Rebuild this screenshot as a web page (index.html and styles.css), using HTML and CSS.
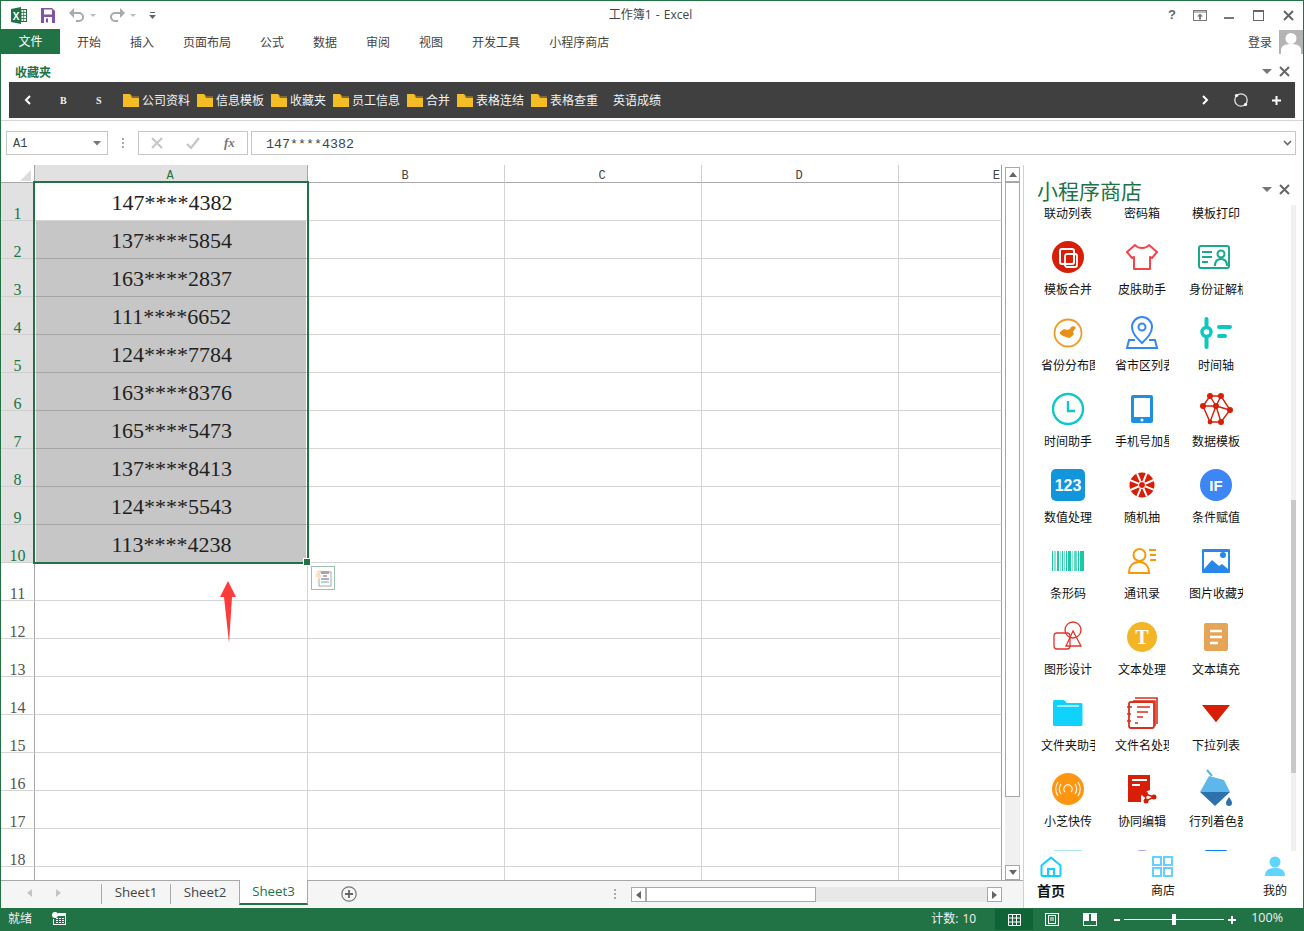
FILE: index.html
```html
<!DOCTYPE html>
<html lang="zh-CN">
<head>
<meta charset="utf-8">
<title>工作簿1 - Excel</title>
<link rel="stylesheet" href="styles.css">
</head>
<body>
<div class="window">
  <header class="titlebar">
    <div class="quick">
      <svg class="qa-excel" width="16" height="17" viewBox="0 0 16 17"><path d="M0 2l10-2v17L0 15z" fill="#217346"/><rect x="10" y="2.500" width="5.500" height="12" fill="#fff" stroke="#217346"/><path d="M10 5.500h5M10 8.500h5M10 11.500h5M12.700 3v11" stroke="#217346" stroke-width=".8"/><text x="5" y="12.500" font-family="Liberation Sans" font-weight="700" font-size="10" fill="#fff" text-anchor="middle">X</text></svg>
      <svg class="qa-save" width="14" height="15" viewBox="0 0 14 15"><path d="M0 0h11l3 3v12H0z" fill="#8053a8"/><rect x="3" y="1.500" width="8" height="5" fill="#fff"/><rect x="3" y="9" width="8" height="6" fill="#fff"/><rect x="5" y="10.500" width="2" height="4" fill="#8053a8"/></svg>
      <svg class="qa-undo" width="27" height="14" viewBox="0 0 27 14"><path d="M4 5h6a4 4 0 0 1 0 8H7" fill="none" stroke="#aaa" stroke-width="2"/><path d="M0 5l5-5v10z" fill="#aaa"/><path d="M21 6h6l-3 3z" fill="#bbb"/></svg>
      <svg class="qa-redo" width="27" height="14" viewBox="0 0 27 14"><path d="M12 5H6a4 4 0 0 0 0 8h3" fill="none" stroke="#aaa" stroke-width="2"/><path d="M16 5l-5-5v10z" fill="#aaa"/><path d="M21 6h6l-3 3z" fill="#bbb"/></svg>
      <svg class="qa-more" width="7" height="8" viewBox="0 0 7 8"><path d="M1 0h5v1H1zM0 3h7L3.500 7z" fill="#666"/></svg>
    </div>
    <div class="doc-title">工作簿1 - Excel</div>
    <div class="win-btns">
      <span class="help">?</span>
      <svg class="btn-display" width="14" height="11" viewBox="0 0 14 11"><rect x=".5" y=".5" width="13" height="10" fill="none" stroke="#777"/><path d="M1 2h12" stroke="#777"/><path d="M7 3.500l3 3H8v3H6v-3H4z" fill="#777"/></svg>
      <svg width="10" height="10" viewBox="0 0 10 10"><rect y="7" width="10" height="2" fill="#777"/></svg>
      <svg width="11" height="11" viewBox="0 0 11 11"><rect x=".5" y=".5" width="10" height="10" fill="none" stroke="#666"/><rect width="11" height="2" fill="#666"/></svg>
      <svg width="11" height="11" viewBox="0 0 11 11"><path d="M1 1l9 9M10 1l-9 9" stroke="#666" stroke-width="2"/></svg>
    </div>
  </header>

  <nav class="tabs">
    <div class="tab-file">文件</div>
    <div class="tab-list">
      <span>开始</span><span>插入</span><span>页面布局</span><span>公式</span><span>数据</span><span>审阅</span><span>视图</span><span>开发工具</span><span>小程序商店</span>
    </div>
    <div class="account">
      <span>登录</span>
      <svg width="24" height="24" viewBox="0 0 24 24"><rect width="24" height="24" fill="#b4b4b4"/><circle cx="12" cy="8.500" r="5.500" fill="#fff"/><path d="M2 24v-4c0-4 4-6 10-6s10 2 10 6v4z" fill="#fff"/></svg>
    </div>
  </nav>

  <section class="ribbon">
    <div class="fav-head">
      <span class="fav-title">收藏夹</span>
      <svg class="pane-drop" width="10" height="6" viewBox="0 0 10 6"><path d="M0 0h10L5 5z" fill="#777"/></svg>
      <svg class="pane-close" width="11" height="11" viewBox="0 0 11 11"><path d="M1 1l9 9M10 1l-9 9" stroke="#666" stroke-width="2"/></svg>
    </div>
    <div class="fav-bar">
      <svg class="nav-back" width="8" height="10" viewBox="0 0 8 10"><path d="M6 1L2 5l4 4" fill="none" stroke="#fff" stroke-width="2"/></svg>
      <span class="fav-b">B</span>
      <span class="fav-s">S</span>
      <span class="fav-item"><svg width="16" height="13" viewBox="0 0 16 13"><path d="M0 0h7l2 2h7v11H0z" fill="#f4bd26"/><path d="M7 0l2 2h7v2H9z" fill="#7d6a3a"/></svg>公司资料</span>
      <span class="fav-item"><svg width="16" height="13" viewBox="0 0 16 13"><path d="M0 0h7l2 2h7v11H0z" fill="#f4bd26"/><path d="M7 0l2 2h7v2H9z" fill="#7d6a3a"/></svg>信息模板</span>
      <span class="fav-item"><svg width="16" height="13" viewBox="0 0 16 13"><path d="M0 0h7l2 2h7v11H0z" fill="#f4bd26"/><path d="M7 0l2 2h7v2H9z" fill="#7d6a3a"/></svg>收藏夹</span>
      <span class="fav-item"><svg width="16" height="13" viewBox="0 0 16 13"><path d="M0 0h7l2 2h7v11H0z" fill="#f4bd26"/><path d="M7 0l2 2h7v2H9z" fill="#7d6a3a"/></svg>员工信息</span>
      <span class="fav-item"><svg width="16" height="13" viewBox="0 0 16 13"><path d="M0 0h7l2 2h7v11H0z" fill="#f4bd26"/><path d="M7 0l2 2h7v2H9z" fill="#7d6a3a"/></svg>合并</span>
      <span class="fav-item"><svg width="16" height="13" viewBox="0 0 16 13"><path d="M0 0h7l2 2h7v11H0z" fill="#f4bd26"/><path d="M7 0l2 2h7v2H9z" fill="#7d6a3a"/></svg>表格连结</span>
      <span class="fav-item"><svg width="16" height="13" viewBox="0 0 16 13"><path d="M0 0h7l2 2h7v11H0z" fill="#f4bd26"/><path d="M7 0l2 2h7v2H9z" fill="#7d6a3a"/></svg>表格查重</span>
      <span class="fav-plain">英语成绩</span>
      <svg class="nav-next" width="8" height="10" viewBox="0 0 8 10"><path d="M2 1l4 4-4 4" fill="none" stroke="#fff" stroke-width="2"/></svg>
      <svg class="nav-sync" width="16" height="16" viewBox="0 0 16 16"><circle cx="8" cy="8" r="6.200" fill="none" stroke="#e4e4e4" stroke-width="1.300"/><circle cx="3.500" cy="3.500" r="1.600" fill="#fff"/><circle cx="12.500" cy="12.500" r="1.600" fill="#fff"/></svg>
      <svg class="nav-plus" width="9" height="9" viewBox="0 0 9 9"><path d="M4.500 0v9M0 4.500h9" stroke="#fff" stroke-width="2"/></svg>
    </div>
  </section>

  <div class="formula-row">
    <div class="name-box"><span class="mono-shift">A1</span><svg width="8" height="5" viewBox="0 0 8 5"><path d="M0 0h8L4 4.500z" fill="#777"/></svg></div>
    <div class="dots"><i></i><i></i><i></i></div>
    <div class="fx-box">
      <svg width="12" height="12" viewBox="0 0 12 12"><path d="M1 1l10 10M11 1L1 11" stroke="#c6c6c6" stroke-width="2"/></svg>
      <svg width="14" height="12" viewBox="0 0 14 12"><path d="M1 7l4 4 8-10" fill="none" stroke="#c6c6c6" stroke-width="2.200"/></svg>
      <span class="fx">fx</span>
    </div>
    <div class="formula-input"><span class="mono-shift">147****4382</span><svg width="9" height="6" viewBox="0 0 9 6"><path d="M1 1l3.500 3.500L8 1" fill="none" stroke="#666" stroke-width="1.600"/></svg></div>
  </div>

  <div class="work">
    <div class="book">
      <div class="sheet-area">
        <div class="grid">
          <div class="corner"><svg width="11" height="11" viewBox="0 0 11 11"><path d="M11 0v11H0z" fill="#dcdcdc"/></svg></div>
          <div class="col sel-col">A</div><div class="col">B</div><div class="col">C</div><div class="col">D</div><div class="col col-last">E</div>

          <div class="rh on">1</div><div class="c a c-first">147****4382</div><div class="c"></div><div class="c"></div><div class="c"></div><div class="c end"></div>
          <div class="rh on">2</div><div class="c a sel">137****5854</div><div class="c"></div><div class="c"></div><div class="c"></div><div class="c end"></div>
          <div class="rh on">3</div><div class="c a sel">163****2837</div><div class="c"></div><div class="c"></div><div class="c"></div><div class="c end"></div>
          <div class="rh on">4</div><div class="c a sel">111****6652</div><div class="c"></div><div class="c"></div><div class="c"></div><div class="c end"></div>
          <div class="rh on">5</div><div class="c a sel">124****7784</div><div class="c"></div><div class="c"></div><div class="c"></div><div class="c end"></div>
          <div class="rh on">6</div><div class="c a sel">163****8376</div><div class="c"></div><div class="c"></div><div class="c"></div><div class="c end"></div>
          <div class="rh on">7</div><div class="c a sel">165****5473</div><div class="c"></div><div class="c"></div><div class="c"></div><div class="c end"></div>
          <div class="rh on">8</div><div class="c a sel">137****8413</div><div class="c"></div><div class="c"></div><div class="c"></div><div class="c end"></div>
          <div class="rh on">9</div><div class="c a sel">124****5543</div><div class="c"></div><div class="c"></div><div class="c"></div><div class="c end"></div>
          <div class="rh on">10</div><div class="c a sel">113****4238</div><div class="c"></div><div class="c"></div><div class="c"></div><div class="c end"></div>
          <div class="rh">11</div><div class="c"></div><div class="c"></div><div class="c"></div><div class="c"></div><div class="c end"></div>
          <div class="rh">12</div><div class="c"></div><div class="c"></div><div class="c"></div><div class="c"></div><div class="c end"></div>
          <div class="rh">13</div><div class="c"></div><div class="c"></div><div class="c"></div><div class="c"></div><div class="c end"></div>
          <div class="rh">14</div><div class="c"></div><div class="c"></div><div class="c"></div><div class="c"></div><div class="c end"></div>
          <div class="rh">15</div><div class="c"></div><div class="c"></div><div class="c"></div><div class="c"></div><div class="c end"></div>
          <div class="rh">16</div><div class="c"></div><div class="c"></div><div class="c"></div><div class="c"></div><div class="c end"></div>
          <div class="rh">17</div><div class="c"></div><div class="c"></div><div class="c"></div><div class="c"></div><div class="c end"></div>
          <div class="rh">18</div><div class="c"></div><div class="c"></div><div class="c"></div><div class="c"></div><div class="c end"></div>
          <div class="rh"></div><div class="c"></div><div class="c"></div><div class="c"></div><div class="c"></div><div class="c end"></div>

          <div class="selection"><span class="handle"></span></div>
          <div class="paste-opt"><svg width="18" height="18" viewBox="0 0 18 18"><rect x="5" y="3" width="12" height="14" fill="#fff" stroke="#a8a8a8"/><rect x="7" y="2" width="8" height="3" fill="#a8a8a8"/><path d="M4 1L1 8h3L3 13l5-7H5l2-5z" fill="#fbe3c4"/><rect x="9" y="6" width="4" height="2" fill="#eb9b8f"/><rect x="7" y="9" width="8" height="2" fill="#98b9d6"/><rect x="7" y="12" width="8" height="2" fill="#b9d8c9"/></svg></div>
          <svg class="red-arrow" width="16" height="62" viewBox="0 0 16 62"><path d="M8 0l8 16h-4L9 62 4 16H0z" fill="#ff3b3b"/></svg>
        </div>
        <div class="vscroll">
          <div class="sb-btn"><svg width="8" height="5" viewBox="0 0 8 5"><path d="M0 5h8L4 0z" fill="#666"/></svg></div>
          <div class="v-track"><div class="v-thumb"></div></div>
          <div class="sb-btn"><svg width="8" height="5" viewBox="0 0 8 5"><path d="M0 0h8L4 5z" fill="#666"/></svg></div>
        </div>
      </div>
      <div class="sheet-bar">
        <svg class="sn-l" width="5" height="8" viewBox="0 0 5 8"><path d="M5 0v8L0 4z" fill="#c4c4c4"/></svg>
        <svg class="sn-r" width="5" height="8" viewBox="0 0 5 8"><path d="M0 0v8l5-4z" fill="#c4c4c4"/></svg>
        <div class="stab first">Sheet1</div>
        <div class="stab">Sheet2</div>
        <div class="stab active">Sheet3</div>
        <svg class="add-sheet" width="16" height="16" viewBox="0 0 16 16"><circle cx="8" cy="8" r="7.200" fill="none" stroke="#777" stroke-width="1.200"/><path d="M8 4v8M4 8h8" stroke="#666" stroke-width="1.800"/></svg>
        <div class="dots sheet-dots"><i></i><i></i><i></i></div>
        <div class="hscroll">
          <div class="sb-btn h"><svg width="5" height="8" viewBox="0 0 5 8"><path d="M5 0v8L0 4z" fill="#666"/></svg></div>
          <div class="h-thumb"></div>
          <div class="h-track"></div>
          <div class="sb-btn h"><svg width="5" height="8" viewBox="0 0 5 8"><path d="M0 0v8l5-4z" fill="#666"/></svg></div>
        </div>
      </div>
    </div>

    <aside class="store">
      <div class="store-head">
        <span class="store-title">小程序商店</span>
        <svg class="pane-drop" width="10" height="6" viewBox="0 0 10 6"><path d="M0 0h10L5 5z" fill="#777"/></svg>
        <svg class="pane-close" width="11" height="11" viewBox="0 0 11 11"><path d="M1 1l9 9M10 1l-9 9" stroke="#666" stroke-width="2"/></svg>
      </div>
      <div class="store-body">
        <div class="app-grid">
          <div class="app cut"><span>联动列表</span></div>
          <div class="app cut"><span>密码箱</span></div>
          <div class="app cut"><span>模板打印</span></div>

          <div class="app"><svg viewBox="-20 -20 40 40"><circle r="16" fill="#d81e06"/><rect x="-8" y="-8" width="14" height="15" rx="2" fill="none" stroke="#fff" stroke-width="2"/><rect x="-3" y="-3" width="12" height="13" rx="2" fill="none" stroke="#fff" stroke-width="1.800"/></svg><span>模板合并</span></div>
          <div class="app"><svg viewBox="-20 -20 40 40"><path d="M-7-12C-4-8 4-8 7-12l8 7-5 6-2-1v12H-8V0l-2 1-5-6z" fill="none" stroke="#f4454a" stroke-width="2" stroke-linejoin="round"/></svg><span>皮肤助手</span></div>
          <div class="app"><svg viewBox="-20 -20 40 40"><rect x="-17" y="-11" width="30" height="22" rx="2" fill="none" stroke="#1aa98d" stroke-width="2"/><path d="M-14-5h10M-14 0h10M-14 5h6" stroke="#1aa98d" stroke-width="2"/><circle cx="5" cy="-3" r="3.500" fill="none" stroke="#1aa98d" stroke-width="2"/><path d="M-1 9c0-5 2-7 6-7s6 2 6 7" fill="none" stroke="#1aa98d" stroke-width="2"/></svg><span>身份证解析</span></div>

          <div class="app"><svg viewBox="-20 -20 40 40"><circle r="13.500" fill="none" stroke="#ec9b2a" stroke-width="1.800"/><path d="M-8-1l4-3 3 1 3-1 1-2 3-1 2 2-2 2-1 2 1 2-3 3-2 1-3-1-3-1-3-2z" fill="#e88f17"/></svg><span>省份分布图</span></div>
          <div class="app"><svg viewBox="-20 -20 40 40"><path d="M0 10C-6 4-10 0-10-6a10 10 0 0 1 20 0C10 0 6 4 0 10z" fill="none" stroke="#3587f5" stroke-width="2"/><circle cy="-6" r="3.500" fill="none" stroke="#3587f5" stroke-width="2"/><path d="M-7 7h-6l-2 8h30l-2-8H7" fill="none" stroke="#3587f5" stroke-width="2"/></svg><span>省市区列表</span></div>
          <div class="app"><svg viewBox="-20 -20 40 40"><path d="M-9.500-14v28" stroke="#0dc8c0" stroke-width="4" stroke-linecap="round"/><circle cx="-9.500" cy="-1" r="4.500" fill="#fff" stroke="#0dc8c0" stroke-width="3.500"/><path d="M3-6H14M3 3H9" stroke="#0dc8c0" stroke-width="4" stroke-linecap="round"/></svg><span>时间轴</span></div>

          <div class="app"><svg viewBox="-20 -20 40 40"><circle r="15" fill="none" stroke="#12c6cc" stroke-width="2.400"/><path d="M0-8V2h7" fill="none" stroke="#12c6cc" stroke-width="2.400"/></svg><span>时间助手</span></div>
          <div class="app"><svg viewBox="-20 -20 40 40"><rect x="-11" y="-14" width="22" height="28" rx="2" fill="#1d8fe4"/><rect x="-8" y="-11" width="16" height="19" fill="#fff"/><circle cy="11" r="1.500" fill="#fff"/></svg><span>手机号加星</span></div>
          <div class="app"><svg viewBox="-20 -20 40 40"><g fill="none" stroke="#d81e06" stroke-width="1.400"><path d="M-6-13H5L14 1 5 13H-6L-13-3z"/><path d="M-13-3H0L14 1M0-3L-6 13M0-3L5 13M-6-13L0-3M5-13L0-3"/></g><g fill="#d81e06"><circle cx="-6" cy="-13" r="3"/><circle cx="5" cy="-13" r="3"/><circle cx="14" cy="1" r="3"/><circle cx="-13" cy="-3" r="3"/><circle cy="-3" r="3"/><circle cx="5" cy="13" r="3"/><circle cx="-6" cy="13" r="2.400"/></g></svg><span>数据模板</span></div>

          <div class="app"><svg viewBox="-20 -20 40 40"><rect x="-17" y="-16" width="34" height="32" rx="5" fill="#1296db"/><text y="6" text-anchor="middle" class="ic-text ic-123">123</text></svg><span>数值处理</span></div>
          <div class="app"><svg viewBox="-20 -20 40 40"><circle r="12.500" fill="#d81e06"/><path d="M0-13V13M-13 0H13M-9-9L9 9M9-9L-9 9" stroke="#fff" stroke-width="2" transform="rotate(22)"/><circle r="3.500" fill="#d81e06" stroke="#fff" stroke-width="1"/></svg><span>随机抽</span></div>
          <div class="app"><svg viewBox="-20 -20 40 40"><circle r="16" fill="#3d86f6"/><text y="5.500" text-anchor="middle" class="ic-text ic-if">IF</text></svg><span>条件赋值</span></div>

          <div class="app"><svg viewBox="-20 -20 40 40"><g fill="#1cc9a4"><rect x="-16" y="-10" width="1" height="20"/><rect x="-14" y="-10" width="2" height="20" opacity=".5"/><rect x="-11" y="-10" width="2" height="20"/><rect x="-8" y="-10" width="1" height="20" opacity=".5"/><rect x="-6" y="-10" width="1" height="20"/><rect x="-4" y="-10" width="1" height="20" opacity=".6"/><rect x="-2" y="-10" width="1" height="20"/><rect x="0" y="-10" width="3" height="20"/><rect x="4" y="-10" width="1" height="20" opacity=".5"/><rect x="6" y="-10" width="3" height="20" opacity=".7"/><rect x="10" y="-10" width="1" height="20"/><rect x="12" y="-10" width="4" height="20"/></g></svg><span>条形码</span></div>
          <div class="app"><svg viewBox="-20 -20 40 40"><circle cx="-2.500" cy="-6" r="6" fill="none" stroke="#f79a0a" stroke-width="2"/><path d="M-13 12c0-7 4-11 10-11s10 4 10 11z" fill="none" stroke="#f79a0a" stroke-width="2"/><path d="M7-11h7M8-6h6M8-1h6" stroke="#f79a0a" stroke-width="2"/></svg><span>通讯录</span></div>
          <div class="app"><svg viewBox="-20 -20 40 40"><rect x="-14" y="-12" width="28" height="24" rx="1" fill="#2a87ea"/><path d="M-12 8l8-9 7 6 3-2 6 5V-9h-24z" fill="#fff"/><circle cx="7" cy="-6" r="3" fill="#2a87ea"/></svg><span>图片收藏夹</span></div>

          <div class="app"><svg viewBox="-20 -20 40 40"><g fill="none" stroke="#e0352b" stroke-width="1.300"><rect x="-14" y="-4" width="16" height="16" rx="3"/><circle cx="5" cy="-7" r="8"/><path d="M5-6L-2 9h15z"/></g></svg><span>图形设计</span></div>
          <div class="app"><svg viewBox="-20 -20 40 40"><circle r="15" fill="#f3b526"/><text y="7" text-anchor="middle" class="ic-text ic-t">T</text></svg><span>文本处理</span></div>
          <div class="app"><svg viewBox="-20 -20 40 40"><rect x="-12" y="-14" width="24" height="28" rx="2" fill="#e6a556"/><path d="M-6-6H6M-6 0H6M-6 6H2" stroke="#fff" stroke-width="2.600"/></svg><span>文本填充</span></div>

          <div class="app"><svg viewBox="-20 -20 40 40"><path d="M-15-11a2 2 0 0 1 2-2h9l3 3h14a1.500 1.500 0 0 1 1.500 1.500V11.500a1.500 1.500 0 0 1-1.500 1.500h-26.500a1.500 1.500 0 0 1-1.500-1.500z" fill="#0fd2ff"/><path d="M-11-7h22" stroke="#c4f3ff" stroke-width="1.600"/></svg><span>文件夹助手</span></div>
          <div class="app"><svg viewBox="-20 -20 40 40"><g fill="none" stroke="#d8301c" stroke-width="1.600"><path d="M-7-15H15V11"/><path d="M-9-12H13V13"/></g><rect x="-13" y="-11" width="25" height="26" rx="2" fill="#fff" stroke="#d8301c" stroke-width="1.800"/><path d="M-5-6H8M-5-1H6M-5 4H1M-15-6h5M-15 1h4M-15 8h4M-7 10h3" stroke="#d8301c" stroke-width="1.600"/></svg><span>文件名处理</span></div>
          <div class="app"><svg viewBox="-20 -20 40 40"><path d="M-14-8H14L1 8a1 1 0 0 1-2 0z" fill="#d81e06"/></svg><span>下拉列表</span></div>

          <div class="app"><svg viewBox="-20 -20 40 40"><circle r="16" fill="#ff9612"/><g fill="none" stroke="#fff" stroke-width="1.200"><path d="M-3 3a4.200 4.200 0 1 1 6 0"/><path d="M-7-5a9 9 0 0 0 0 10M7-5a9 9 0 0 1 0 10M-10-7a13 13 0 0 0 0 14M10-7a13 13 0 0 1 0 14" stroke-opacity=".9"/></g></svg><span>小芝快传</span></div>
          <div class="app"><svg viewBox="-20 -20 40 40"><path d="M-14-14H8V1L3 3-1 7v6H-14z" fill="#d81e06"/><path d="M-10-9H5M-10-4H-2" stroke="#fff" stroke-width="1.800"/><g fill="#d81e06"><circle cx="3" cy="5" r="3"/><circle cx="12" cy="8" r="2.500"/><circle cx="4" cy="12" r="2.500"/></g><path d="M3 5l9 3-8 4z" fill="none" stroke="#d81e06" stroke-width="1.500"/></svg><span>协同编辑</span></div>
          <div class="app"><svg viewBox="-20 -20 40 40"><path d="M-9-19l5 6" stroke="#5cb5ea" stroke-width="2"/><path d="M-16 3L-7-13 8-9 14 3z" fill="#5eb7ea"/><path d="M-16 3H14L-1 17z" fill="#2d71ad"/><path d="M13 8c2 3 3 4 3 6a3 3 0 0 1-6 0c0-2 1-3 3-6z" fill="#2d71ad"/></svg><span>行列着色器</span></div>

          <div class="app"><svg viewBox="-20 -20 40 40"><path d="M-14-15h28v3h-28z" fill="#a9eaf4"/></svg></div>
          <div class="app"><svg viewBox="-20 -20 40 40"><circle cy="-2" r="13" fill="#a999f5"/></svg></div>
          <div class="app"><svg viewBox="-20 -20 40 40"><rect x="-12" y="-15" width="24" height="24" rx="3" fill="#0f7df2"/></svg></div>
        </div>
        <div class="store-scroll"><div class="store-thumb"></div></div>
      </div>
      <footer class="store-nav">
        <div class="nav-item home"><svg width="22" height="21" viewBox="0 0 22 21"><path d="M1.500 9.500L11 1.500l9.500 8V19a1 1 0 0 1-1 1h-17a1 1 0 0 1-1-1z" fill="none" stroke="#12cfff" stroke-width="2" stroke-linejoin="round"/><path d="M8 20v-7h6v7" fill="none" stroke="#12cfff" stroke-width="2"/></svg><span>首页</span></div>
        <div class="nav-item shop"><svg width="21" height="21" viewBox="0 0 21 21"><g fill="none" stroke="#63d0ff" stroke-width="2"><rect x="1" y="1" width="8" height="8"/><rect x="12" y="1" width="8" height="8"/><rect x="1" y="12" width="8" height="8"/><rect x="12" y="12" width="8" height="8"/></g></svg><span>商店</span></div>
        <div class="nav-item mine"><svg width="22" height="21" viewBox="0 0 22 21"><circle cx="11" cy="6" r="5.500" fill="#5fd4ff"/><path d="M1 20c0-6 4-8 10-8s10 2 10 8z" fill="#5fd4ff"/></svg><span>我的</span></div>
      </footer>
    </aside>
  </div>

  <footer class="status">
    <span class="ready">就绪</span>
    <svg class="macro" width="14" height="13" viewBox="0 0 14 13"><circle cx="3" cy="3" r="3" fill="#fff"/><path d="M6 1h8v12H1V7h1v5h11V4H6z" fill="#fff"/><path d="M4 6h2v1H4zm3 0h2v1H7zm3 0h2v1h-2zM4 8h2v1H4zm3 0h2v1H7zm3 0h2v1h-2zM4 10h2v1H4zm3 0h2v1H7zm3 0h2v1h-2z" fill="#fff"/></svg>
    <span class="count">计数: 10</span>
    <div class="view active"><svg width="13" height="12" viewBox="0 0 13 12"><path d="M.5.500h12v11H.5zM4.500.500v11M8.500.500v11M.5 4h12M.5 8h12" fill="none" stroke="#fff"/></svg></div>
    <div class="view"><svg width="14" height="13" viewBox="0 0 14 13"><rect x=".5" y=".5" width="13" height="12" fill="none" stroke="#fff"/><rect x="3.500" y="2.500" width="7" height="8" fill="none" stroke="#fff"/><path d="M5 5h4M5 7h4" stroke="#fff"/></svg></div>
    <div class="view"><svg width="14" height="13" viewBox="0 0 14 13"><rect x=".5" y=".5" width="13" height="12" fill="none" stroke="#fff"/><path d="M1 1h5v7H1zM8 1h5v7H8z" fill="#fff"/></svg></div>
    <span class="zoom-minus"></span>
    <div class="zoom-track"><span class="zoom-knob"></span></div>
    <svg class="zoom-plus" width="8" height="8" viewBox="0 0 8 8"><path d="M4 0v8M0 4h8" stroke="#fff" stroke-width="2"/></svg>
    <span class="zoom-val">100%</span>
  </footer>
</div>
</body>
</html>
```

FILE: styles.css
```css
* { box-sizing: border-box; }
html, body { margin: 0; padding: 0; }
body {
  width: 1304px;
  height: 931px;
  overflow: hidden;
  font-family: "Noto Sans CJK SC", "Liberation Sans", sans-serif;
  font-size: 12px;
  color: #444;
  background: #fff;
}
svg { display: block; flex: none; }

.window {
  width: 1304px;
  height: 931px;
  display: flex;
  flex-direction: column;
  border: 1px solid #217346;
  border-bottom: 0;
  background: #fff;
}

/* title bar */
.titlebar {
  height: 28px;
  flex: none;
  display: grid;
  grid-template-columns: 1fr auto 1fr;
  align-items: center;
}
.quick { display: flex; align-items: center; padding-left: 10px; }
.qa-excel { margin-right: 14px; }
.qa-save { margin-right: 14px; }
.qa-undo { margin-right: 13px; }
.qa-more { margin-left: 13px; margin-top: 2px; }
.doc-title {
  padding: 0 3px 0 0;
  font-family: "Open Sans", "Noto Sans CJK SC", sans-serif;
  word-spacing: 1px;
  color: #444;
  line-height: 16px;
}
.win-btns { display: flex; align-items: center; justify-content: flex-end; gap: 19px; padding-right: 9px; }
.help { font-family: "Liberation Sans", sans-serif; font-weight: 700; font-size: 13px; color: #666; margin-right: -2px; line-height: 14px; }
.btn-display { margin-right: -2px; }

/* tabs */
.tabs { height: 25px; flex: none; display: flex; align-items: center; }
.tab-file {
  width: 59px;
  height: 25px;
  background: #217346;
  color: #fff;
  text-align: center;
  line-height: 24px;
}
.tab-list { display: flex; gap: 29px; margin-left: 17px; color: #444; }
.account { margin-left: auto; display: flex; align-items: center; gap: 7px; }

/* favourites ribbon */
.ribbon { height: 67px; flex: none; border-bottom: 1px solid #d4d4d4; }
.fav-head { height: 28px; display: flex; align-items: flex-end; padding: 0 13px 2px 14px; }
.fav-title { color: #217346; font-weight: 700; line-height: 17px; }
.fav-head .pane-drop { margin-left: auto; margin-bottom: 5px; }
.fav-head .pane-close { margin-left: 7px; margin-bottom: 3px; }
.fav-bar {
  margin: 0 8px;
  width: 1286px;
  height: 36px;
  background: #404040;
  color: #fff;
  display: flex;
  align-items: center;
}
.nav-back { margin-left: 15px; }
.fav-b, .fav-s { font-family: "Liberation Serif", serif; font-weight: 700; font-size: 10px; width: 8px; color: #f2f2f2; }
.fav-b { margin-left: 28px; }
.fav-s { margin-left: 28px; margin-right: 19px; }
.fav-item { display: flex; align-items: center; gap: 3px; margin-right: 7px; color: #f2f2f2; line-height: 16px; }
.fav-plain { margin-left: 8px; color: #f2f2f2; line-height: 16px; padding-bottom: 1px; }
.nav-next { margin-left: auto; }
.nav-sync { margin-left: 24px; }
.nav-plus { margin-left: 23px; margin-right: 14px; }

/* formula row */
.formula-row { height: 44px; flex: none; padding: 10px 7px 10px 5px; display: flex; }
.name-box {
  width: 102px;
  border: 1px solid #c6c6c6;
  display: flex;
  align-items: center;
  justify-content: space-between;
  padding: 0 6px 0 6px;
  font-family: "Liberation Mono", monospace;
  color: #444;
}
.mono-shift { padding-top: 2px; }
.dots { width: 30px; display: flex; flex-direction: column; align-items: center; justify-content: center; gap: 2px; }
.dots i { width: 2px; height: 2px; background: #aaa; }
.fx-box {
  width: 110px;
  border: 1px solid #c6c6c6;
  display: flex;
  align-items: center;
  padding-left: 12px;
  gap: 23px;
}
.fx { font-family: "Liberation Serif", serif; font-style: italic; font-weight: 700; font-size: 13px; color: #777; margin-left: 1px; }
.formula-input {
  flex: 1;
  margin-left: 3px;
  border: 1px solid #c6c6c6;
  display: flex;
  align-items: center;
  justify-content: space-between;
  padding: 0 3px 0 14px;
  font-family: "Liberation Mono", monospace;
  font-size: 13.33px;
  color: #444;
}

/* workbook */
.work { flex: 1; min-height: 0; display: flex; }
.book { width: 1022px; flex: none; display: flex; flex-direction: column; }
.sheet-area { height: 715px; flex: none; display: flex; }

.grid {
  width: 1001px;
  height: 715px;
  flex: none;
  position: relative;
  overflow: hidden;
  display: grid;
  grid-template-columns: 34px 273px 197px 197px 197px 103px;
  grid-template-rows: 18px repeat(19, 38px);
}
.corner { border-right: 1px solid #a8a8a8; border-bottom: 1px solid #a8a8a8; display: flex; justify-content: flex-end; align-items: flex-end; padding: 0 3px 1px 0; }
.col {
  border-right: 1px solid #d0d0d0;
  border-bottom: 1px solid #a8a8a8;
  text-align: center;
  font-family: "Liberation Mono", monospace;
  font-size: 12px;
  line-height: 23px;
  color: #444;
  padding-right: 2px;
}
.col-last { text-align: right; padding-right: 1px; border-right: 1px solid #a0a0a0; }
.sel-col { background: #e1e1e1; color: #217346; border-right-color: #a8a8a8; }
.rh {
  border-right: 1px solid #a8a8a8;
  border-bottom: 1px solid #d4d4d4;
  font-family: "Liberation Serif", serif;
  font-size: 16px;
  line-height: 12px;
  color: #555;
  display: flex;
  justify-content: center;
  align-items: flex-end;
}
.rh.on { background: #e1e1e1; color: #217346; border-bottom-color: #cfcfcf; }
.c { border-right: 1px solid #d4d4d4; border-bottom: 1px solid #d4d4d4; }
.c.end { border-right-color: #a0a0a0; }
.a {
  font-family: "Liberation Serif", serif;
  font-size: 22px;
  color: #222;
  text-align: center;
  line-height: 40px;
  padding-left: 2px;
}
.sel { background: #c6c6c6; border-left: 1px solid #fff; border-right: 2px solid #fff; border-bottom-color: #a6a6a6; padding-left: 1px; }

.selection {
  position: absolute;
  left: 32px;
  top: 16px;
  width: 276px;
  height: 383px;
  border: 2px solid #217346;
}
.handle {
  position: absolute;
  right: -3px;
  bottom: -3px;
  width: 6px;
  height: 6px;
  background: #217346;
  outline: 1px solid #fff;
}
.paste-opt {
  position: absolute;
  left: 310px;
  top: 401px;
  width: 24px;
  height: 24px;
  border: 1px solid #9bc0ab;
  background: #fff;
  display: flex;
  align-items: center;
  justify-content: center;
}
.red-arrow { position: absolute; left: 219px; top: 416px; }

.vscroll { width: 21px; flex: none; padding: 2px 3px 0 3px; display: flex; flex-direction: column; }
.sb-btn {
  width: 15px;
  height: 15px;
  flex: none;
  border: 1px solid #a8a8a8;
  background: #fff;
  display: flex;
  align-items: center;
  justify-content: center;
}
.v-track { flex: 1; background: #f0f0f0; }
.v-thumb { height: 615px; background: #fff; border: 1px solid #a8a8a8; }

/* sheet tabs */
.sheet-bar {
  flex: 1;
  background: #f5f5f5;
  border-top: 1px solid #a8a8a8;
  display: flex;
  align-items: flex-start;
  font-family: "Open Sans", "Liberation Sans", sans-serif;
  font-size: 13.300px;
}
.sn-l { margin: 8px 0 0 26px; }
.sn-r { margin: 8px 0 0 24px; }
.stab {
  width: 69px;
  height: 20px;
  margin-top: 3px;
  line-height: 17px;
  text-align: center;
  color: #444;
  border-right: 1px solid #aaa;
}
.stab.first { width: 70px; margin-left: 40px; border-left: 1px solid #aaa; }
.stab.active {
  margin-top: -1px;
  height: 25px;
  line-height: 23px;
  background: #fff;
  color: #217346;
  border: 1px solid #a8a8a8;
  border-top: 0;
  border-bottom: 2px solid #217346;
  margin-left: -1px;
  width: 69px;
}
.add-sheet { margin: 5px 0 0 33px; }
.sheet-dots { width: 2px; height: 14px; margin: 6px 0 0 257px; }
.hscroll { width: 371px; margin: 6px 0 0 15px; height: 15px; display: flex; }
.sb-btn.h { width: 15px; }
.h-thumb { width: 170px; background: #fff; border: 1px solid #a8a8a8; }
.h-track { flex: 1; background: #e8e8e8; }

/* mini-program store */
.store { width: 280px; flex: none; border-left: 1px solid #d0d0d0; display: flex; flex-direction: column; }
.store-head { height: 40px; flex: none; display: flex; align-items: flex-start; padding: 12px 13px 0 13px; }
.store-title { font-size: 21px; line-height: 27px; color: #217346; }
.store-head .pane-drop { margin: 10px 0 0 auto; }
.store-head .pane-close { margin: 7px 0 0 7px; }
.store-body { flex: 1; min-height: 0; display: flex; overflow: hidden; }
.app-grid {
  width: 267px;
  flex: none;
  display: grid;
  grid-template-columns: repeat(3, 74px);
  grid-auto-rows: 76px;
  grid-template-rows: 22px;
  padding-left: 7px;
  align-content: start;
}
.app { display: flex; flex-direction: column; align-items: center; padding-top: 10px; color: #111; }
.app svg { width: 40px; height: 40px; margin-bottom: 4px; }
.app span { display: block; width: 54px; height: 16px; line-height: 16px; text-align: center; white-space: nowrap; overflow: hidden; }
.app.cut { padding-top: 0; }
.ic-text { font-family: "Liberation Sans", sans-serif; font-weight: 700; fill: #fff; }
.ic-123 { font-size: 16px; }
.ic-if { font-size: 15px; }
.ic-t { font-family: "Liberation Serif", serif; font-size: 20px; }
.store-scroll { width: 5px; flex: none; background: #f0f0f0; padding-top: 295px; }
.store-thumb { height: 273px; background: #c8c8c8; }
.store-nav { height: 57px; flex: none; display: flex; justify-content: space-between; padding: 5px 16px 0 13px; }
.nav-item { display: flex; flex-direction: column; align-items: center; color: #111; line-height: 17px; }
.nav-item svg { margin-bottom: 4px; }
.nav-item.home span { font-size: 14px; font-weight: 700; line-height: 20px; margin-top: -1px; }
.nav-item.shop { margin-left: -2px; }

/* status bar */
.status {
  height: 23px;
  flex: none;
  margin: 0 -1px;
  background: #217346;
  color: #f1f1f1;
  display: flex;
  align-items: center;
}
.ready { margin: 0 0 4px 8px; }
.macro { margin: 0 0 2px 20px; }
.count {
  margin: 0 19px 4px auto;
  font-family: "Open Sans", "Noto Sans CJK SC", sans-serif;
  word-spacing: 1px;
}
.view { width: 38px; height: 21px; display: flex; align-items: center; justify-content: center; }
.view.active { background: #0e6436; }
.zoom-minus { width: 6px; height: 2px; background: #fff; margin-left: 5px; margin-right: 4px; }
.zoom-track { width: 100px; height: 1px; background: #fff; position: relative; }
.zoom-knob { position: absolute; left: 48px; top: -5px; width: 4px; height: 11px; background: #fff; }
.zoom-plus { margin-left: 4px; }
.zoom-val { margin: 0 21px 4px 15px; font-family: "Open Sans", "Liberation Sans", sans-serif; font-size: 12.500px; }
```
